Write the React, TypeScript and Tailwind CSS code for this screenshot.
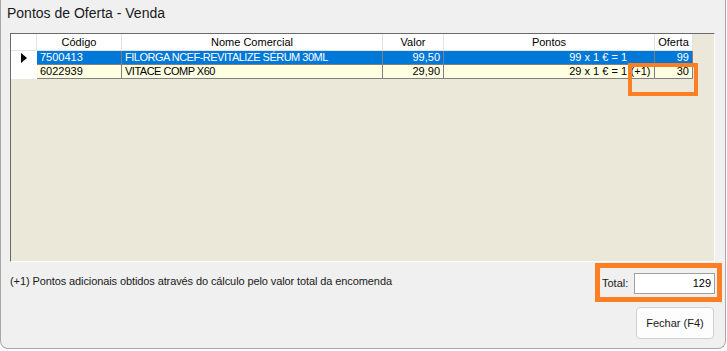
import React from "react";

const FONT = { fontFamily: '"Liberation Sans", Arial, sans-serif' };

const COLS = [
  { key: "codigo", label: "Código", w: "w-[85px]" },
  { key: "nome", label: "Nome Comercial", w: "w-[261px]" },
  { key: "valor", label: "Valor", w: "w-[61px]" },
  { key: "pontos", label: "Pontos", w: "w-[211px]" },
  { key: "oferta", label: "Oferta", w: "w-[38px]" },
];

const ROWS = [
  { codigo: "7500413", nome: "FILORGA NCEF-REVITALIZE SÉRUM 30ML", valor: "99,50", pontos: "99 x 1 € = 1", extra: "", oferta: "99" },
  { codigo: "6022939", nome: "VITACE COMP X60", valor: "29,90", pontos: "29 x 1 € = 1", extra: "(+1)", oferta: "30" },
];

export default function App() {
  return (
    <div className="w-[727px] h-[351px] bg-white relative overflow-hidden" style={FONT}>
      <div className="w-[726px] h-[349px] bg-[#f0f0f0] border-l border-r border-b border-[#a8a8a8] rounded-b-[8px] flex flex-col text-black">
        {/* title */}
        <div className="h-[33px] pl-[6px] pt-[5px] text-[14px] leading-[16px] text-[#1a1a1a]">Pontos de Oferta - Venda</div>

        {/* grid */}
        <div className="ml-[9px] w-[705px] h-[229px] bg-[#ebe8d9] border-t border-l border-t-[#6a6a6a] border-l-[#6a6a6a] border-r border-b border-r-[#fdfdfd] border-b-[#fdfdfd] text-[11px] leading-[13px]">
          <div className="flex h-[17px] w-[682px] bg-white border-b border-[#e2e2e2]">
            <div className="w-[26px] border-r border-[#e2e2e2]" />
            {COLS.map((c) => (
              <div key={c.key} className={`${c.w} text-center pt-[2px] border-r border-[#e2e2e2]`}>
                {c.label}
              </div>
            ))}
          </div>
          {ROWS.map((r, i) => {
            const sel = i === 0;
            return (
              <div key={r.codigo} className="flex h-[14px]">
                <div className="w-[26px] bg-white flex items-center justify-center">
                  {sel && (
                    <svg width="6" height="10" viewBox="0 0 6 10">
                      <path d="M0 0 L6 5 L0 10 Z" fill="#000" />
                    </svg>
                  )}
                </div>
                <div className={`flex ${sel ? "bg-[#0078d7] text-white" : "bg-[#ffffe1] text-black"}`}>
                  <div className="w-[85px] pl-[3px] border-r border-b border-[#808080] truncate">{r.codigo}</div>
                  <div className="w-[261px] pl-[3px] border-r border-b border-[#808080] truncate tracking-[-0.5px]">{r.nome}</div>
                  <div className="w-[61px] pr-[3px] text-right border-r border-b border-[#808080]">{r.valor}</div>
                  <div className="w-[211px] flex justify-end border-r border-b border-[#808080]">
                    <span>{r.pontos}</span>
                    <span className="w-[27px] text-center">{r.extra}</span>
                  </div>
                  <div className="w-[38px] pr-[3px] text-right border-r border-b border-[#808080]">{r.oferta}</div>
                </div>
              </div>
            );
          })}
        </div>

        {/* footer */}
        <div className="ml-[9px] mt-[12px] text-[11px] leading-[14px] tracking-[-0.1px] text-[#1a1a1a]">
          (+1) Pontos adicionais obtidos através do cálculo pelo valor total da encomenda
        </div>
        <div className="flex-1" />
        <div className="flex justify-end pr-[11px] pb-[9px]">
          <button className="w-[78px] h-[32px] rounded-[4px] border border-[#d0d0d0] bg-[#fdfdfd] text-[11px] text-[#1a1a1a]">
            Fechar (F4)
          </button>
        </div>
      </div>

      {/* Total field */}
      <div className="absolute left-[602px] top-[273px] flex items-center gap-[4px] text-[11px]">
        <span className="text-[#1a1a1a] w-[28px]">Total:</span>
        <div className="w-[81px] h-[21px] bg-white border border-[#a0a0a0] text-right pr-[3px] leading-[19px]">129</div>
      </div>

      {/* highlight boxes */}
      <div className="absolute left-[628px] top-[63px] w-[70px] h-[33px] border-[4px] border-[#fd7e23]" />
      <div className="absolute left-[595px] top-[263px] w-[127px] h-[39px] border-[5px] border-[#fd7e23]" />
    </div>
  );
}
